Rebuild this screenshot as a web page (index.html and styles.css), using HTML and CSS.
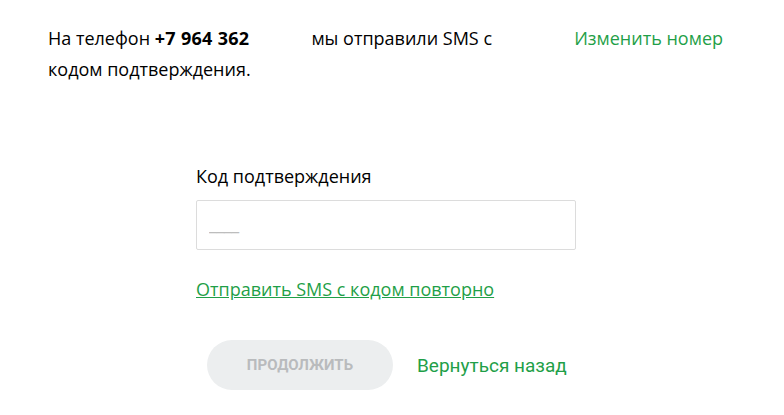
FILE: index.html
```html
<!DOCTYPE html>
<html lang="ru">
<head>
    <meta charset="UTF-8">
    <title>Подтверждение номера</title>
    <link rel="stylesheet" href="styles.css">
</head>
<body>
    <div class="page">
        <!-- шапка с номером -->
        <div class="head">
            <p class="notice">На телефон <b class="phone">+7 964 362</b>мы отправили SMS с кодом подтверждения.</p>
            <a class="change" href="#">Изменить номер</a>
        </div>

        <!-- форма ввода кода -->
        <div class="form">
            <label class="label" for="code">Код подтверждения</label>
            <div class="field">
                <input id="code" type="text" placeholder="____">
            </div>
            <a class="resend" href="#">Отправить SMS с кодом повторно</a>

            <div class="actions">
                <button class="next" disabled>Продолжить</button>
                <a class="back" href="#">Вернуться назад</a>
            </div>
        </div>
    </div>
</body>
</html>
```

FILE: styles.css
```css
body {
    margin: 0;
    font-family: "Open Sans", "Liberation Sans", sans-serif;
    background-color: #fff;
    color: #000;
}

.page {
    width: 784px;
    height: 415px;
}

.head {
    display: flex;
    justify-content: space-between;
    padding: 23px 61px 0 48px;
}

.notice {
    margin: 0;
    width: 470px;
    font-size: 18px;
    line-height: 31px;
}

/* скрытая часть номера */
.phone {
    font-weight: 700;
    letter-spacing: 0.3px;
    margin-right: 62px;
}

.change {
    color: #1f9f48;
    text-decoration: none;
    font-size: 18px;
    line-height: 31px;
}

.form {
    display: flex;
    flex-direction: column;
    align-items: flex-start;
    padding: 78px 0 0 196px;
}

.label {
    font-size: 18px;
    line-height: 26px;
}

.field {
    margin-top: 11px;
}

.field input {
    box-sizing: border-box;
    width: 380px;
    height: 50px;
    border: 1px solid #dcdcdc;
    border-radius: 2px;
    padding: 0 12px 4px;
    font-family: "Open Sans", sans-serif;
    font-size: 18px;
    letter-spacing: -0.5px;
    outline: none;
}

.field input::placeholder {
    color: #bdbdbd;
}

.resend {
    margin-top: 26px;
    color: #1f9f48;
    font-size: 18px;
    line-height: 26px;
}

.actions {
    display: flex;
    align-items: center;
    margin-top: 38px;
    margin-left: 11px;
}

.next {
    width: 186px;
    height: 50px;
    border: none;
    border-radius: 25px;
    background-color: #eceeef;
    color: #b9bbbd;
    font-family: Roboto, "Liberation Sans", sans-serif;
    font-weight: 700;
    font-size: 15px;
    text-transform: uppercase;
}

.back {
    margin-left: 24px;
    color: #1f9f48;
    text-decoration: none;
    font-family: Roboto, "Liberation Sans", sans-serif;
    font-size: 19px;
}
```
